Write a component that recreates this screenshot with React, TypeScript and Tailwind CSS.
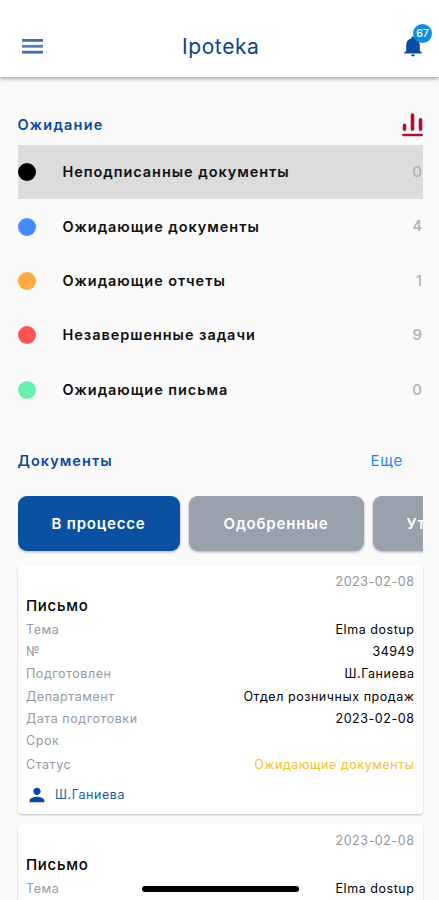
const pending = [
  { label: "Неподписанные документы", count: 0, dot: "bg-black", active: true },
  { label: "Ожидающие документы", count: 4, dot: "bg-[#448aff]" },
  { label: "Ожидающие отчеты", count: 1, dot: "bg-[#ffab40]" },
  { label: "Незавершенные задачи", count: 9, dot: "bg-[#ff5252]" },
  { label: "Ожидающие письма", count: 0, dot: "bg-[#69f0ae]" },
];

const letter = {
  date: "2023-02-08",
  title: "Письмо",
  rows: [
    ["Тема", "Elma dostup"],
    ["№", "34949"],
    ["Подготовлен", "Ш.Ганиева"],
    ["Департамент", "Отдел розничных продаж"],
    ["Дата подготовки", "2023-02-08"],
    ["Срок", ""],
  ],
  status: "Ожидающие документы",
  author: "Ш.Ганиева",
};

export default function App() {
  return (
    <div className="relative flex h-[900px] w-full flex-col overflow-hidden bg-[#fafafa] font-['Inter','Liberation_Sans',sans-serif] text-black">
      <Header />
      <main className="flex flex-col pt-[27px] pr-[16px] pl-[17.5px]">
        <div className="flex h-[41px] items-center justify-between">
          <h2 className="text-[14.5px] font-semibold tracking-[1.2px] text-[#0d47a1]">
            Ожидание
          </h2>
          <ChartIcon />
        </div>
        <ul>
          {pending.map((item) => (
            <li
              key={item.label}
              className={`flex h-[54.4px] items-center ${item.active ? "bg-[#dcdcdc]" : ""}`}
            >
              <span className={`size-[18px] rounded-full ${item.dot}`} />
              <span className="ml-[27px] flex-1 text-[14.5px] font-semibold tracking-[0.95px] text-[#111]">
                {item.label}
              </span>
              <span className="mr-px text-[15px] font-medium text-[#aeb1b6]">
                {item.count}
              </span>
            </li>
          ))}
        </ul>

        <div className="mt-[28px] flex h-[32px] items-center justify-between">
          <h2 className="text-[14.5px] font-semibold tracking-[1.05px] text-[#0d47a1]">
            Документы
          </h2>
          <a className="mr-[20px] text-[15px] tracking-[0.8px] text-[#1a8cee]">
            Еще
          </a>
        </div>
        <div className="mt-[19px] flex h-[58px] shrink-0 gap-[9px] overflow-hidden text-[15px] font-semibold tracking-[0.8px] text-white">
          <Tab className="w-[162px] bg-[#0b51a1]">В процессе</Tab>
          <Tab className="w-[175px] bg-[#98a1ac]">Одобренные</Tab>
          <Tab className="w-[175px] justify-start! bg-[#98a1ac] pl-[34px]">
            Утвержденные
          </Tab>
        </div>
        <div className="mt-[11px] flex flex-col gap-[10px]">
          <LetterCard />
          <LetterCard />
        </div>
      </main>
      <div className="absolute bottom-[8.5px] left-[142px] h-[5.5px] w-[157px] rounded-full bg-black" />
    </div>
  );
}

function Header() {
  return (
    <header className="flex h-[77px] shrink-0 items-center justify-between bg-white pt-[15px] pr-[14px] pl-[21.5px] shadow-[0_1px_5px_rgba(0,0,0,0.45)]">
      <MenuIcon />
      <h1 className="mr-[2px] pt-px text-[21px] tracking-[0.6px] text-[#0d3f94]">
        Ipoteka
      </h1>
      <div className="relative">
        <BellIcon />
        <span className="absolute -top-[10px] -right-[7px] flex size-[19px] items-center justify-center rounded-full bg-[#0f8fe0] text-[10.5px] font-medium text-white">
          67
        </span>
      </div>
    </header>
  );
}

function Tab({ className, children }: { className: string; children: string }) {
  return (
    <button
      className={`flex h-[55px] shrink-0 items-center justify-center rounded-[9px] pt-px shadow-[0_1px_3px_rgba(0,0,0,0.3)] ${className}`}
    >
      {children}
    </button>
  );
}

function LetterCard() {
  return (
    <article className="flex h-[249px] shrink-0 flex-col rounded-[4px] bg-white px-[8.5px] pt-[7px] text-[12.5px] tracking-[0.55px] shadow-[0_1px_2px_rgba(0,0,0,0.25)]">
      <div className="flex h-[20px] items-center justify-end text-[#929699]">
        {letter.date}
      </div>
      <h3 className="flex h-[27px] items-center pt-px text-[15px] font-medium tracking-[0.7px]">
        {letter.title}
      </h3>
      {letter.rows.map(([name, value]) => (
        <div key={name} className="flex h-[22.3px] items-center justify-between">
          <span className="text-[#929aa3]">{name}</span>
          <span>{value}</span>
        </div>
      ))}
      <div className="flex h-[26px] items-center justify-between">
        <span className="text-[#929aa3]">Статус</span>
        <span className="text-[#fbc02d]">{letter.status}</span>
      </div>
      <div className="flex h-[33px] items-center text-[#1a5ca8]">
        <PersonIcon />
        <span className="ml-[7px] pt-px">{letter.author}</span>
      </div>
    </article>
  );
}

function MenuIcon() {
  return (
    <svg width="21" height="15" viewBox="0 0 21 15" fill="#3f70ac">
      <rect width="21" height="2.8" />
      <rect y="5.9" width="21" height="2.8" fill="#5b80b8" />
      <rect y="11.8" width="21" height="2.8" />
    </svg>
  );
}

function BellIcon() {
  return (
    <svg width="24" height="24" viewBox="0 0 24 24" fill="#0b4da2">
      <path d="M12 22.5c1.1 0 2-.9 2-2h-4c0 1.1.89 2 2 2zM18.8 17v-6c0-3.3-1.9-5.9-5.1-6.5V4c0-.9-.75-1.6-1.7-1.6S10.300 3.100 10.300 4v.5C7.100 5.100 5.200 7.700 5.200 11v6l-1.900 1.200v1.300h17.400v-1.300z" />
    </svg>
  );
}

function ChartIcon() {
  return (
    <svg
      width="21"
      height="24"
      viewBox="0 0 21 24"
      fill="none"
      stroke="#b0102f"
      strokeLinecap="round"
    >
      <path d="M2.5 12.200v4M10.500 2v14.200M18.500 6.700V16.200" strokeWidth="3.600" />
      <path d="M1.300 22h18.400" strokeWidth="2.400" />
    </svg>
  );
}

function PersonIcon() {
  return (
    <svg width="22" height="22" viewBox="0 0 24 24" fill="#0b47a1">
      <path d="M12 12c2.21 0 4-1.79 4-4s-1.79-4-4-4-4 1.79-4 4 1.79 4 4 4zm0 2c-2.67 0-8 1.34-8 4v2h16v-2c0-2.66-5.33-4-8-4z" />
    </svg>
  );
}
